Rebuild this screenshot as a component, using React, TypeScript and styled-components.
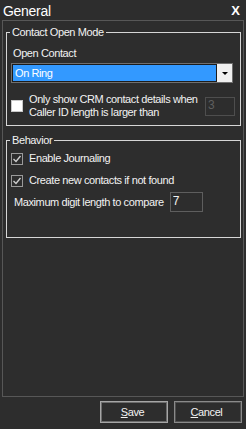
import React from "react";
import styled, { createGlobalStyle } from "styled-components";

const GlobalStyle = createGlobalStyle`
  html, body { margin: 0; padding: 0; background: #2d2d2d; }
  body { font-family: "Liberation Sans", Arial, sans-serif; }
  * { box-sizing: border-box; }
`;

const Window = styled.div`
  width: 246px;
  height: 429px;
  background: #2d2d2d;
  color: #f2f2f2;
  display: flex;
  flex-direction: column;
  font-family: "Liberation Sans", Arial, sans-serif;
  font-size: 11px;
  letter-spacing: -0.4px;
  line-height: 13px;
  overflow: hidden;
`;

const TitleBar = styled.div`
  height: 20px;
  flex: none;
  display: flex;
  align-items: flex-start;
  justify-content: space-between;
  padding: 3px 6px 0 3px;
`;

const Title = styled.span`
  font-size: 14px;
  line-height: 16px;
  letter-spacing: -0.3px;
  color: #ffffff;
`;

const Close = styled.span`
  font-size: 13px;
  font-weight: bold;
  line-height: 16px;
  letter-spacing: 0;
  color: #ffffff;
`;

const Panel = styled.div`
  margin-left: 2px;
  width: 242px;
  height: 377px;
  flex: none;
  border: 1px solid #575757;
  padding: 11px 2px 0 3px;
  display: flex;
  flex-direction: column;
`;

const Group = styled.div<{ $height: number; $top: number }>`
  position: relative;
  height: ${(p) => p.$height}px;
  margin-top: ${(p) => p.$top}px;
  border: 1px solid #d6d6d6;
  padding: 0 5px 0 4px;
  display: flex;
  flex-direction: column;
`;

const Legend = styled.span`
  position: absolute;
  top: -7px;
  left: 3px;
  padding: 0 2px;
  background: #2d2d2d;
  color: #f2f2f2;
  line-height: 13px;
`;

const Label = styled.div<{ $top: number }>`
  margin-top: ${(p) => p.$top}px;
  margin-left: 2px;
  line-height: 13px;
`;

const Combo = styled.div`
  margin-top: 3px;
  width: 222px;
  height: 20px;
  display: flex;
  border: 1px solid #6f6f6f;
  background: #f0f0f0;
`;

const ComboValue = styled.div`
  flex: 1;
  background: #3399ff;
  border: 1px solid #1c1c1c;
  color: #ffffff;
  padding-left: 2px;
  line-height: 16px;
`;

const ComboArrow = styled.div`
  width: 15px;
  display: flex;
  align-items: center;
  justify-content: center;
  &::after {
    content: "";
    border-left: 3px solid transparent;
    border-right: 3px solid transparent;
    border-top: 3px solid #000;
  }
`;

const Row = styled.div<{ $top: number; $height: number }>`
  margin-top: ${(p) => p.$top}px;
  height: ${(p) => p.$height}px;
  display: flex;
  align-items: center;
`;

const Box = styled.span<{ $checked: boolean }>`
  width: 12px;
  height: 12px;
  flex: none;
  border: 1px solid ${(p) => (p.$checked ? "#9a9a9a" : "#c8c8c8")};
  background: ${(p) => (p.$checked ? "#2d2d2d" : "#ffffff")};
  display: flex;
  align-items: center;
  justify-content: center;
`;

const CheckText = styled.span`
  margin-left: 6px;
  line-height: 13px;
`;

const RowLabel = styled.span`
  margin-left: 3px;
  line-height: 13px;
`;

const Field = styled.input<{ $muted?: boolean; $width: number; $height: number; $gap?: number }>`
  width: ${(p) => p.$width}px;
  height: ${(p) => p.$height}px;
  flex: none;
  margin: 0 0 0 ${(p) => p.$gap ?? 0}px;
  border: 1px solid ${(p) => (p.$muted ? "#4e4e4e" : "#5e5e5e")};
  background: transparent;
  color: ${(p) => (p.$muted ? "#5f5f5f" : "#f2f2f2")};
  font-family: "Liberation Sans", Arial, sans-serif;
  font-size: 12px;
  padding: 0 0 3px 2px;
  outline: none;
`;

const Spacer = styled.span`
  flex: 1;
`;

const Footer = styled.div`
  margin-top: 4px;
  display: flex;
  justify-content: flex-end;
  gap: 6px;
  padding-right: 4px;
`;

const Button = styled.button<{ $default?: boolean }>`
  width: 68px;
  height: 22px;
  background: #2d2d2d;
  color: #f2f2f2;
  border: 1px solid ${(p) => (p.$default ? "#a6a6a6" : "#8a8a8a")};
  box-shadow: inset 0 0 0 1px ${(p) => (p.$default ? "#6c6c6c" : "#4f4f4f")};
  font-family: "Liberation Sans", Arial, sans-serif;
  font-size: 11px;
  letter-spacing: -0.4px;
  padding: 0 3px 0 0;
  u { text-decoration: underline; }
`;

const Check = () => (
  <svg width="10" height="10" viewBox="0 0 10 10">
    <polyline points="1.5,5 4,7.5 8.5,2" fill="none" stroke="#cfcfcf" strokeWidth="1.4" />
  </svg>
);

const CheckBox = ({ checked }: { checked: boolean }) => (
  <Box $checked={checked}>{checked && <Check />}</Box>
);

export default function App() {
  return (
    <>
      <GlobalStyle />
      <Window>
        <TitleBar>
          <Title>General</Title>
          <Close>X</Close>
        </TitleBar>
        <Panel>
          <Group $height={94} $top={0}>
            <Legend>Contact Open Mode</Legend>
            <Label $top={14}>Open Contact</Label>
            <Combo>
              <ComboValue>On Ring</ComboValue>
              <ComboArrow />
            </Combo>
            <Row $top={10} $height={26}>
              <CheckBox checked={false} />
              <CheckText>
                Only show CRM contact details when
                <br />
                Caller ID length is larger than
              </CheckText>
              <Spacer />
              <Field $muted $width={30} $height={19} readOnly value="3" />
            </Row>
          </Group>
          <Group $height={98} $top={14}>
            <Legend>Behavior</Legend>
            <Row $top={11} $height={13}>
              <CheckBox checked />
              <CheckText>Enable Journaling</CheckText>
            </Row>
            <Row $top={9} $height={13}>
              <CheckBox checked />
              <CheckText>Create new contacts if not found</CheckText>
            </Row>
            <Row $top={5} $height={20}>
              <RowLabel>Maximum digit length to compare</RowLabel>
              <Field $width={33} $height={20} $gap={6} readOnly value="7" />
            </Row>
          </Group>
        </Panel>
        <Footer>
          <Button $default>
            <u>S</u>ave
          </Button>
          <Button>
            <u>C</u>ancel
          </Button>
        </Footer>
      </Window>
    </>
  );
}
